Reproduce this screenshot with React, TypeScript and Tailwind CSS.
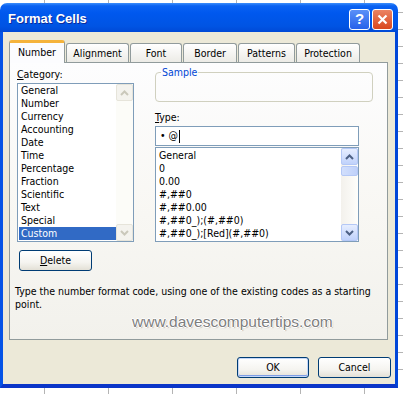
import React from 'react';

const categories = [
  'General', 'Number', 'Currency', 'Accounting', 'Date', 'Time',
  'Percentage', 'Fraction', 'Scientific', 'Text', 'Special', 'Custom',
];

const formats = [
  'General', '0', '0.00', '#,##0', '#,##0.00', '#,##0_);(#,##0)', '#,##0_);[Red](#,##0)',
];

// little chevron used on the scrollbar buttons
const Chevron = ({ down = false, color }: { down?: boolean; color: string }) => (
  <svg width="9" height="6" viewBox="0 0 9 6" className={down ? 'rotate-180' : ''}>
    <path d="M1 5 L4.5 1.5 L8 5" fill="none" stroke={color} strokeWidth="2" />
  </svg>
);

const SheetGrid = () => {
  const rows = Array.from({ length: 22 }, (_, i) => 12 + i * 17);
  const cols = [44, 108, 172, 236, 300, 364];
  return (
    <svg className="absolute inset-0" width="403" height="394">
      {rows.map((y) => (
        <line key={y} x1="0" x2="403" y1={y + 0.5} y2={y + 0.5} stroke="#b4b4b4" />
      ))}
      {cols.map((x) => (
        <line key={x} x1={x + 0.5} x2={x + 0.5} y1="0" y2="394" stroke="#b4b4b4" />
      ))}
    </svg>
  );
};

const XpButton = ({ children, width, isDefault = false }: { children: React.ReactNode; width: string; isDefault?: boolean }) => (
  <div
    className={`${width} h-[21px] rounded-[3px] border border-[#003C74] bg-[linear-gradient(to_bottom,#FFFFFF_0%,#F5F4F0_60%,#E3E0D6_100%)] flex items-center justify-center text-[10.5px] text-black ${
      isDefault ? 'shadow-[inset_0_0_0_1px_#C3D6F8,inset_0_-1px_0_1px_#7E9DE5]' : ''
    }`}
  >
    {children}
  </div>
);

const Tab = ({ label, width, active = false }: { label: string; width: string; active?: boolean }) => (
  <div
    className={`${width} flex items-center justify-center text-[10.5px] text-black rounded-t-[3px] border-x border-[#919B9C] ${
      active
        ? 'relative z-10 h-[23px] -mb-px bg-[#FCFCFE] border-t-[3px] border-t-[#F5B33B]'
        : 'h-[19px] border-t bg-[linear-gradient(to_bottom,#FFFFFF,#ECEBE6)]'
    }`}
  >
    <span className={active ? 'mt-[-1px]' : 'mt-[1px]'}>{label}</span>
  </div>
);

export default function App() {
  return (
    <div className="relative w-[403px] h-[394px] bg-white overflow-hidden font-[family-name:'DejaVu_Sans_Condensed','Liberation_Sans',sans-serif]">
      <SheetGrid />

      <div className="relative pt-[3px]">
        <div className="w-[398px] flex flex-col">
          {/* title bar */}
          <div className="h-[29px] pt-[3px] pl-[8px] pr-[5px] flex items-center rounded-t-[7px] bg-[linear-gradient(to_bottom,#3C8EFB_0%,#0A62F2_10%,#0058EE_35%,#0054E3_80%,#0049D6_100%)]">
            <span className="flex-1 text-white font-bold text-[13px] font-[family-name:'Liberation_Sans',sans-serif] [text-shadow:1px_1px_0_#0B2C9A]">
              Format Cells
            </span>
            <div className="w-[21px] h-[21px] rounded-[3px] border border-white bg-[linear-gradient(to_bottom,#5A90F8,#2661EA)] flex items-center justify-center text-white font-bold text-[15px] font-[family-name:'Liberation_Sans',sans-serif]">
              ?
            </div>
            <div className="ml-[2px] w-[21px] h-[21px] rounded-[3px] border border-white bg-[linear-gradient(to_bottom,#EB8363,#D9471E)] flex items-center justify-center">
              <svg width="11" height="11" viewBox="0 0 11 11">
                <path d="M1.5 1.5 L9.5 9.5 M9.5 1.5 L1.5 9.5" stroke="white" strokeWidth="2.2" />
              </svg>
            </div>
          </div>

          {/* client area */}
          <div className="h-[356px] border-x-[3px] border-l-[#0553E6] border-r-[#0046D8] border-b-[4px] border-b-[#0A35C8] bg-[#ECE9D8] pt-[8px]">
            {/* tabs */}
            <div className="flex items-end h-[22px] pl-[6px]">
              <Tab label="Number" width="w-[56px]" active />
              <div className="ml-[1px]"><Tab label="Alignment" width="w-[63px]" /></div>
              <div className="ml-[1px]"><Tab label="Font" width="w-[52px]" /></div>
              <div className="ml-[1px]"><Tab label="Border" width="w-[54px]" /></div>
              <div className="ml-[1px]"><Tab label="Patterns" width="w-[57px]" /></div>
              <div className="ml-[1px]"><Tab label="Protection" width="w-[64px]" /></div>
            </div>

            {/* panel */}
            <div className="ml-[6px] w-[379px] h-[278px] border border-[#919B9C] bg-[linear-gradient(to_bottom,#FDFDFE_0%,#F8F7F3_55%,#F2F1EC_100%)] text-[10.5px] text-black">
              <div className="flex">
                {/* left column */}
                <div className="ml-[7px] w-[117px] pt-[5px]">
                  <div className="leading-[13px] h-[13px]"><u>C</u>ategory:</div>
                  <div className="mt-[2px] h-[159px] border border-[#7F9DB9] bg-white flex">
                    <div className="flex-1 pl-px leading-[13px]">
                      {categories.map((c) => (
                        <div
                          key={c}
                          className={`h-[13px] pl-[2px] ${c === 'Custom' ? 'bg-[#316AC5] text-white' : ''}`}
                        >
                          {c}
                        </div>
                      ))}
                    </div>
                    <div className="w-[17px] flex flex-col justify-between bg-[#FCFCF8]">
                      <div className="h-[17px] rounded-[2px] border border-[#E6E4DA] bg-[#F4F3EE] flex items-center justify-center">
                        <Chevron color="#CAC8BB" />
                      </div>
                      <div className="h-[17px] rounded-[2px] border border-[#E6E4DA] bg-[#F4F3EE] flex items-center justify-center">
                        <Chevron down color="#CAC8BB" />
                      </div>
                    </div>
                  </div>
                  <div className="mt-[8px] ml-[2px]">
                    <XpButton width="w-[73px]">
                      <span><u>D</u>elete</span>
                    </XpButton>
                  </div>
                </div>

                {/* right column */}
                <div className="ml-[21px] w-[218px]">
                  <div className="relative mt-[9px] h-[30px] rounded-[4px] border border-[#D0D0BF]">
                    <span className="absolute -top-[7px] left-[5px] px-px leading-[13px] bg-[#FCFCFE] text-[#0046D5]">
                      Sample
                    </span>
                  </div>
                  <div className="mt-[9px] leading-[13px] h-[13px]"><u>T</u>ype:</div>
                  <div className="mt-[2px] w-[204px] h-[20px] border border-[#7F9DB9] bg-white flex items-center pl-[4px]">
                    <span>•&nbsp;@</span>
                    <span className="ml-px w-px h-[13px] bg-black" />
                  </div>
                  <div className="mt-px w-[204px] h-[95px] border border-[#7F9DB9] bg-white flex">
                    <div className="flex-1 pl-[3px] pt-px leading-[13px]">
                      {formats.map((f) => (
                        <div key={f} className="h-[13px]">{f}</div>
                      ))}
                    </div>
                    <div className="w-[17px] flex flex-col bg-[linear-gradient(to_right,#F3F1EC,#FEFEFB)]">
                      <div className="h-[17px] rounded-[2px] border border-[#B4C8F6] bg-[linear-gradient(to_bottom,#E6EEFF,#C0D2FB)] flex items-center justify-center">
                        <Chevron color="#4D6185" />
                      </div>
                      <div className="mt-px h-[10px] rounded-[2px] border border-[#B4C8F6] bg-[linear-gradient(to_right,#D2DFFC,#BFD1FA)]" />
                      <div className="flex-1" />
                      <div className="h-[17px] rounded-[2px] border border-[#B4C8F6] bg-[linear-gradient(to_bottom,#E6EEFF,#C0D2FB)] flex items-center justify-center">
                        <Chevron down color="#4D6185" />
                      </div>
                    </div>
                  </div>
                </div>
              </div>

              <p className="mt-[14px] pl-[5px] leading-[13px]">
                Type the number format code, using one of the existing codes as a starting
                <br />
                point.
              </p>
              <div className="mt-[2px] pl-[122px] leading-[17px] text-[15.5px] text-[#7E7E7E] font-[family-name:'Liberation_Sans',sans-serif] [text-shadow:1px_0_0_#fff,-1px_0_0_#fff,0_1px_0_#fff,0_-1px_0_#fff,1px_1px_1px_#aaa]">
                www.davescomputertips.com
              </div>
            </div>

            {/* dialog buttons */}
            <div className="mt-[17px] flex justify-end gap-[9px] pr-[4px]">
              <XpButton width="w-[72px]" isDefault>OK</XpButton>
              <XpButton width="w-[73px]">Cancel</XpButton>
            </div>
          </div>
        </div>
      </div>
    </div>
  );
}
